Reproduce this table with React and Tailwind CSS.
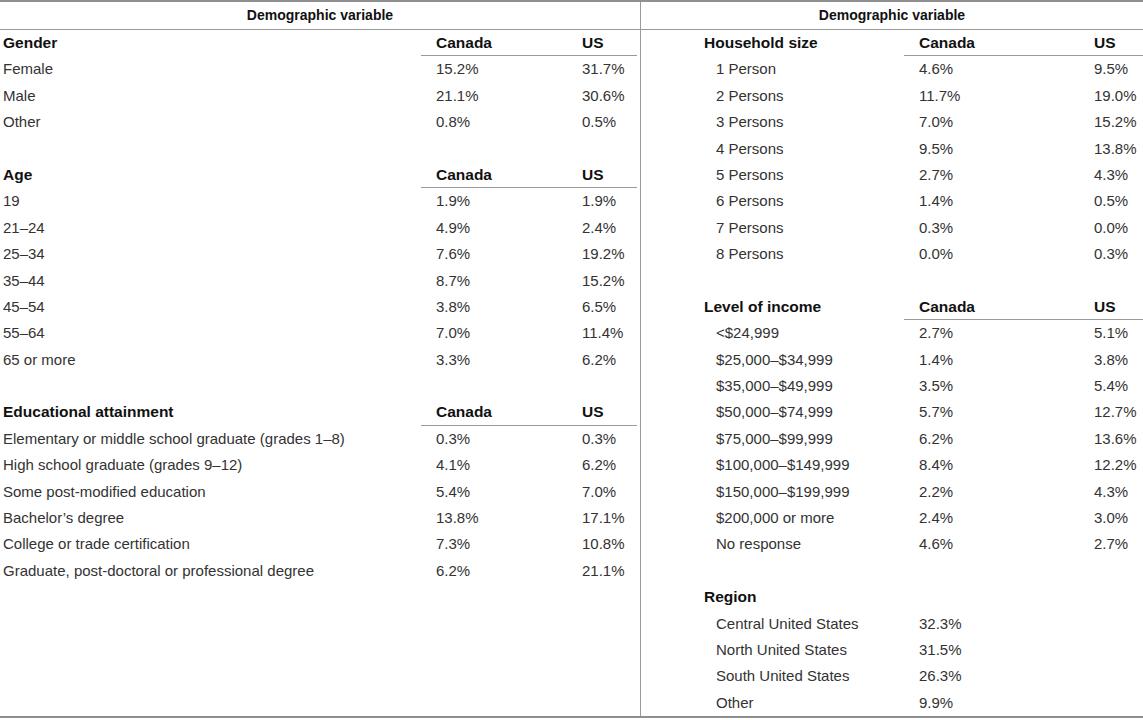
import React from "react";

const leftRows = [
  { head: "Gender" },
  ["Female", "15.2%", "31.7%"],
  ["Male", "21.1%", "30.6%"],
  ["Other", "0.8%", "0.5%"],
  null,
  { head: "Age" },
  ["19", "1.9%", "1.9%"],
  ["21–24", "4.9%", "2.4%"],
  ["25–34", "7.6%", "19.2%"],
  ["35–44", "8.7%", "15.2%"],
  ["45–54", "3.8%", "6.5%"],
  ["55–64", "7.0%", "11.4%"],
  ["65 or more", "3.3%", "6.2%"],
  null,
  { head: "Educational attainment" },
  ["Elementary or middle school graduate (grades 1–8)", "0.3%", "0.3%"],
  ["High school graduate (grades 9–12)", "4.1%", "6.2%"],
  ["Some post-modified education", "5.4%", "7.0%"],
  ["Bachelor’s degree", "13.8%", "17.1%"],
  ["College or trade certification", "7.3%", "10.8%"],
  ["Graduate, post-doctoral or professional degree", "6.2%", "21.1%"],
  null,
  null,
  null,
  null,
  null,
];

const rightRows = [
  { head: "Household size" },
  ["1 Person", "4.6%", "9.5%"],
  ["2 Persons", "11.7%", "19.0%"],
  ["3 Persons", "7.0%", "15.2%"],
  ["4 Persons", "9.5%", "13.8%"],
  ["5 Persons", "2.7%", "4.3%"],
  ["6 Persons", "1.4%", "0.5%"],
  ["7 Persons", "0.3%", "0.0%"],
  ["8 Persons", "0.0%", "0.3%"],
  null,
  { head: "Level of income" },
  ["<$24,999", "2.7%", "5.1%"],
  ["$25,000–$34,999", "1.4%", "3.8%"],
  ["$35,000–$49,999", "3.5%", "5.4%"],
  ["$50,000–$74,999", "5.7%", "12.7%"],
  ["$75,000–$99,999", "6.2%", "13.6%"],
  ["$100,000–$149,999", "8.4%", "12.2%"],
  ["$150,000–$199,999", "2.2%", "4.3%"],
  ["$200,000 or more", "2.4%", "3.0%"],
  ["No response", "4.6%", "2.7%"],
  null,
  { head: "Region", noCols: true },
  ["Central United States", "32.3%", ""],
  ["North United States", "31.5%", ""],
  ["South United States", "26.3%", ""],
  ["Other", "9.9%", ""],
];

const cell = "h-[26.4px] leading-[26.4px] whitespace-nowrap";

const Half = ({ rows, cols, labelPad, itemPad, usClass }) => (
  <div className={`grid ${cols} text-[15px]`}>
    {rows.map((row, i) => {
      if (!row) {
        return <div key={i} className={`${cell} col-span-3`} />;
      }
      if (row.head) {
        return (
          <React.Fragment key={i}>
            <div className={`${cell} ${labelPad} font-bold text-[15.5px] text-[#111]`}>
              {row.head}
            </div>
            {row.noCols ? (
              <div className={`${cell} col-span-2`} />
            ) : (
              <div
                className={`${cell} col-span-2 grid grid-cols-subgrid border-b border-[#9a9a9a] font-bold text-[15.5px] text-[#111] ${usClass}`}
              >
                <div className="pl-[15px]">Canada</div>
                <div className="pl-[15px]">US</div>
              </div>
            )}
          </React.Fragment>
        );
      }
      return (
        <React.Fragment key={i}>
          <div className={`${cell} ${itemPad}`}>{row[0]}</div>
          <div className={`${cell} pl-[15px]`}>{row[1]}</div>
          <div className={`${cell} pl-[15px]`}>{row[2]}</div>
        </React.Fragment>
      );
    })}
  </div>
);

export default function App() {
  return (
    <div
      className="w-[1143px] h-[720px] bg-white text-[14px] text-[#333]"
      style={{ fontFamily: '"Liberation Sans", Arial, sans-serif' }}
    >
      <div className="flex border-t-2 border-b-2 border-[#8f8f8f]">
        {/* Left half */}
        <div className="w-[640px]">
          <div className="h-[28px] flex items-center justify-center border-b border-[#9a9a9a] font-bold text-[#111]">
            Demographic variable
          </div>
          <Half
            rows={leftRows}
            cols="grid-cols-[421px_146px_73px]"
            labelPad="pl-[3px]"
            itemPad="pl-[3px]"
            usClass="mr-[3px]"
          />
        </div>

        {/* Right half */}
        <div className="flex-1 border-l border-[#9a9a9a]">
          <div className="h-[28px] flex items-center justify-center border-b border-[#9a9a9a] font-bold text-[#111]">
            Demographic variable
          </div>
          <Half
            rows={rightRows}
            cols="grid-cols-[263px_175px_64px]"
            labelPad="pl-[63px]"
            itemPad="pl-[75px]"
            usClass=""
          />
        </div>
      </div>
    </div>
  );
}
